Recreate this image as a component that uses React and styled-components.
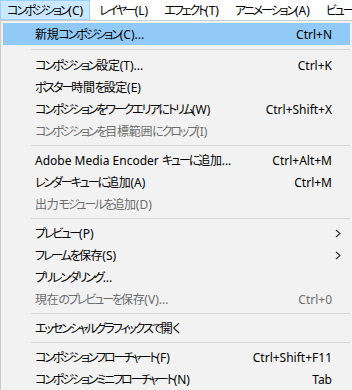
import React from 'react';
import styled, { createGlobalStyle } from 'styled-components';

const GlobalStyle = createGlobalStyle`
    html, body {
        margin: 0;
        padding: 0;
        background: #ffffff;
        overflow: hidden;
    }
    body {
        font-family: "Noto Sans", "Noto Sans CJK JP", sans-serif;
        font-size: 12px;
        font-feature-settings: "palt";
        color: #000;
    }
`;

const menuBarItems = [
    { label: 'コンポジション(C)', active: true },
    { label: 'レイヤー(L)' },
    { label: 'エフェクト(T)' },
    { label: 'アニメーション(A)' },
    { label: 'ビュー(V)' },
];

const menuItems = [
    { label: '新規コンポジション(C)...', shortcut: 'Ctrl+N', hover: true },
    { separator: true, wide: true },
    { label: 'コンポジション設定(T)...', shortcut: 'Ctrl+K' },
    { label: 'ポスター時間を設定(E)' },
    { label: 'コンポジションをワークエリアにトリム(W)', shortcut: 'Ctrl+Shift+X' },
    { label: 'コンポジションを目標範囲にクロップ(I)', disabled: true },
    { separator: true },
    { label: 'Adobe Media Encoder キューに追加...', shortcut: 'Ctrl+Alt+M' },
    { label: 'レンダーキューに追加(A)', shortcut: 'Ctrl+M' },
    { label: '出力モジュールを追加(D)', disabled: true },
    { separator: true },
    { label: 'プレビュー(P)', submenu: true },
    { label: 'フレームを保存(S)', submenu: true },
    { label: 'プリレンダリング...' },
    { label: '現在のプレビューを保存(V)...', shortcut: 'Ctrl+0', disabled: true },
    { separator: true },
    { label: 'エッセンシャルグラフィックスで開く' },
    { separator: true },
    { label: 'コンポジションフローチャート(F)', shortcut: 'Ctrl+Shift+F11' },
    { label: 'コンポジションミニフローチャート(N)', shortcut: 'Tab' },
];

const Screen = styled.div`
    width: 352px;
    height: 390px;
    position: relative;
    overflow: hidden;
    background: #ffffff;
`;

const MenuBar = styled.div`
    display: flex;
    height: 20px;
    background: #ffffff;
    white-space: nowrap;
`;

const MenuBarItem = styled.div`
    display: flex;
    align-items: center;
    flex: 0 0 auto;
    padding: 0 6px;
    margin-right: 2px;
    box-sizing: border-box;
    height: 20px;
    border: 1px solid ${p => (p.$active ? '#99d1ff' : 'transparent')};
    background: ${p => (p.$active ? '#cce8ff' : 'transparent')};
`;

const MenuPanel = styled.div`
    position: absolute;
    top: 20px;
    left: 0;
    width: 353px;
    box-sizing: border-box;
    padding: 2px;
    background: #f2f2f2;
    border: 1px solid #cccccc;
`;

const Row = styled.div`
    display: flex;
    align-items: center;
    justify-content: space-between;
    height: 22px;
    padding: 0 18px 0 32px;
    white-space: nowrap;
    background: ${p => (p.$hover ? '#91c9f7' : 'transparent')};
    color: ${p => (p.$disabled ? '#6d6d6d' : '#000000')};
`;

// kana in the reference UI font is condensed, kanji are not
const Kana = styled.span`
    letter-spacing: -2.1px;
`;

const Kanji = styled.span`
    letter-spacing: -0.3px;
`;

const Shortcut = styled.span`
    flex: 0 0 auto;
    margin-left: 16px;
`;

const Arrow = styled.svg`
    flex: 0 0 auto;
    margin-right: -9px;
`;

const Separator = styled.div`
    height: ${p => (p.$wide ? 9 : 7)}px;
    display: flex;
    align-items: center;
    padding-left: 28px;

    &::after {
        content: '';
        flex: 1 1 auto;
        height: 1px;
        background: #d7d7d7;
    }
`;

const Label = ({ text }) => (
    <span>
        {text.split(/([\u3040-\u30ff]+|[\u4e00-\u9fff]+)/).map((part, i) => {
            if (/^[\u3040-\u30ff]+$/.test(part)) return <Kana key={i}>{part}</Kana>;
            if (/^[\u4e00-\u9fff]+$/.test(part)) return <Kanji key={i}>{part}</Kanji>;
            return part;
        })}
    </span>
);

const SubmenuArrow = () => (
    <Arrow width="6" height="9" viewBox="0 0 6 9">
        <path d="M1 1 L5 4.5 L1 8" fill="none" stroke="#333" strokeWidth="1.1" />
    </Arrow>
);

const App = () => (
    <Screen>
        <GlobalStyle />
        <MenuBar>
            {menuBarItems.map(item => (
                <MenuBarItem key={item.label} $active={item.active}>
                    <Label text={item.label} />
                </MenuBarItem>
            ))}
        </MenuBar>
        <MenuPanel>
            {menuItems.map((item, i) =>
                item.separator ? (
                    <Separator key={i} $wide={item.wide} />
                ) : (
                    <Row key={i} $hover={item.hover} $disabled={item.disabled}>
                        <Label text={item.label} />
                        {item.shortcut && <Shortcut>{item.shortcut}</Shortcut>}
                        {item.submenu && <SubmenuArrow />}
                    </Row>
                ),
            )}
        </MenuPanel>
    </Screen>
);

export default App;
